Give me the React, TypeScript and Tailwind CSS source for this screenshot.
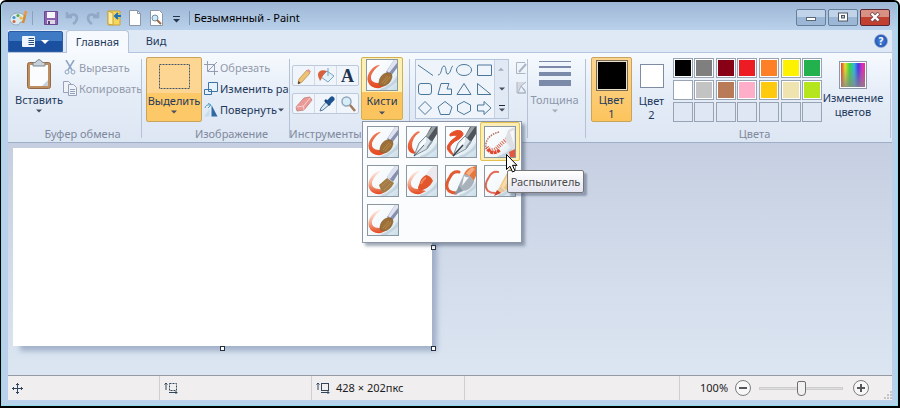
import { useState } from "react";
import type { ReactNode } from "react";

type BrushKind = "brush" | "calligraphy1" | "calligraphy2" | "spray" | "oil" | "crayon" | "marker" | "pencil" | "watercolor";

const brushes: { kind: BrushKind; name: string }[] = [
  { kind: "brush", name: "Кисть" },
  { kind: "calligraphy1", name: "Каллиграфическая кисть 1" },
  { kind: "calligraphy2", name: "Каллиграфическая кисть 2" },
  { kind: "spray", name: "Распылитель" },
  { kind: "oil", name: "Кисть для масла" },
  { kind: "crayon", name: "Пастель" },
  { kind: "marker", name: "Маркер" },
  { kind: "pencil", name: "Карандаш" },
  { kind: "watercolor", name: "Акварель" },
];

const palette = [
  "#000000", "#7f7f7f", "#880015", "#ed1c24", "#ff7f27", "#fff200", "#22b14c",
  "#ffffff", "#c3c3c3", "#b97a57", "#ffaec9", "#ffc90e", "#efe4b0", "#b5e61d",
];

function BrushTip({ kind }: { kind: BrushKind }) {
  switch (kind) {
    case "brush":
    case "watercolor":
      return (
        <>
          <path d="M28 1H31V9L25 17L20 13Z" fill="#8890b0" />
          <path d="M28 1L21 12L23 14L31 4V1Z" fill="#dfe3f1" />
          <path d="M13 23Q14 16 20 14Q26 13 26 18Q24 26 17 27Q12 27 13 23Z" fill="#9c7038" stroke="#7d5728" strokeWidth=".6" />
          <path d="M16 24L22 17M18 25L24 18" stroke="#b98a4c" />
        </>
      );
    case "oil":
      return (
        <>
          <path d="M28 1H31V9L26 17L20 12Z" fill="#8890b0" />
          <path d="M28 1L20 12L23 14L31 4V1Z" fill="#dfe3f1" />
          <path d="M12 20L20 13L27 18Q23 26 15 28Z" fill="#a27b46" />
          <path d="M15 21L22 15M17 25L24 18" stroke="#b58d55" />
        </>
      );
    case "calligraphy1":
    case "calligraphy2":
      return (
        <>
          <path d="M25 1H31V8L26 16L20 10Z" fill="#4f555b" />
          <path d="M26 1L20 10L22 12L30 1Z" fill="#9ba2a8" />
          <path d="M20 10L26 16L21 23L8 30L13 17Z" fill="#d9e2e8" stroke="#6a7a86" strokeWidth=".8" />
          <path d="M20 11L14 18L11 26L20 16Z" fill="#fafdff" />
          <path d="M8 30L18 19" stroke="#333f48" strokeWidth={kind === "calligraphy2" ? 1.4 : 0.8} />
          <path d="M21 22L26 15" stroke="#8a99a5" strokeWidth="1.500" />
        </>
      );
    case "spray":
      return (
        <>
          <path d="M24 4L31 1V26L28 24L21 14Z" fill="#dfe0e3" />
          <path d="M26 6L30 4V18Z" fill="#f8f8f8" />
          <path d="M25 26L31 23V31H26Z" fill="#e4593d" />
        </>
      );
    case "crayon":
      return (
        <>
          <path d="M27 1H31V13L26 17L19 10Z" fill="#ece8ec" />
          <path d="M13 20Q15 12 20 10Q25 11 27 16Q23 24 13 26Q11 23 13 20Z" fill="#e2562b" />
          <path d="M15 19Q17 14 20 13" stroke="#ef835c" strokeWidth="2" fill="none" />
        </>
      );
    case "marker":
      return (
        <>
          <path d="M19 9Q22 2 31 1V11L28 17Z" fill="#e8763f" />
          <path d="M21 8L27 2L30 4L24 11Z" fill="#f5ad82" />
          <path d="M19 9Q27 10 29 17Q25 27 15 26L13 22Z" fill="#a9b1ba" />
          <path d="M19 11Q22 13 24 12L17 21Z" fill="#f6f8fa" />
          <path d="M14 21L18 26L9 30Z" fill="#8b98a6" />
        </>
      );
    case "pencil":
      return (
        <>
          <path d="M27 1L31 4V19L24 26L16 21Z" fill="#edc078" />
          <path d="M27 4L17 21L20 23L30 7Z" fill="#f8dba6" />
          <path d="M16 21L22 26L11 30Z" fill="#e8c79d" />
          <path d="M13 25L17 28L10 31Z" fill="#d0402b" />
        </>
      );
  }
}

function BrushStroke({ kind }: { kind: BrushKind }) {
  const ink = `url(#ink-${kind})`;
  switch (kind) {
    case "calligraphy1":
      return <path d="M14 6Q12 4 8 8Q-1 18 3 25Q5 28 11 28L8 25Q4 20 8 12Q11 8 14 6Z" fill={ink} />;
    case "calligraphy2":
      return <path d="M5 8Q11 3 16 5Q21 8 14 13Q4 18 5 23L9 30Q0 24 3 19Q5 15 11 11Q14 8 5 10Z" fill="#e5502b" stroke="#e5502b" />;
    case "spray":
      return (
        <g fill="none">
          <path d="M15 6Q4 9 2 17Q1 24 5 26" stroke="#b8705e" strokeWidth="1.500" strokeDasharray="1.500 1" />
          <path d="M3 21Q7 27 13 22Q17 18 23 13" stroke="#d9604b" strokeWidth="4" strokeDasharray="1 1.200" />
          <path d="M4 23Q8 30 16 24" stroke="#e1452c" strokeWidth="3" strokeDasharray="3 .6" />
        </g>
      );
    case "marker":
    case "pencil":
      return (
        <path
          d="M14 7Q8 6 5 12Q-1 21 4 26Q7 28 11 28"
          fill="none"
          stroke={kind === "pencil" ? "#df6a55" : "#e25a32"}
          strokeWidth={kind === "pencil" ? 2 : 3}
          strokeLinecap="round"
        />
      );
    default:
      return <path d="M14 6Q9 6 5 11Q0 17 2 23Q5 30 14 29L20 26L12 24Q4 24 5 17Q7 11 14 6Z" fill={ink} />;
  }
}

function BrushIcon({ kind }: { kind: BrushKind }) {
  const pale = kind === "oil" || kind === "watercolor" || kind === "crayon";
  return (
    <svg viewBox="0 0 32 32" className="size-8 shrink-0" aria-hidden="true">
      <defs>
        <linearGradient id={`paper-${kind}`} x1="0" y1="0" x2="1" y2="1">
          <stop offset="0" stopColor="#ffffff" />
          <stop offset=".6" stopColor="#f3f8fb" />
          <stop offset="1" stopColor="#c6dbe7" />
        </linearGradient>
        <linearGradient id={`ink-${kind}`} x1="0" y1="0" x2="0" y2="1">
          <stop offset="0" stopColor={pale ? "#fdeae2" : "#ec7a55"} />
          <stop offset=".5" stopColor={pale ? "#f5b197" : "#ea6a44"} />
          <stop offset="1" stopColor="#e5481f" />
        </linearGradient>
      </defs>
      <rect x=".5" y=".5" width="31" height="31" fill={`url(#paper-${kind})`} stroke="#8b98a2" />
      <path d="M14 30Q25 27 31 17V23L20 31H14Z" fill="#b9ccd8" opacity=".7" />
      <BrushStroke kind={kind} />
      <BrushTip kind={kind} />
    </svg>
  );
}

function Arrow({ muted = false }: { muted?: boolean }) {
  return (
    <svg viewBox="0 0 6 4" className="h-1 w-1.5 shrink-0" aria-hidden="true">
      <path d="M0 .5H6L3 3.5Z" fill={muted ? "#a3abbb" : "#434e61"} />
    </svg>
  );
}

function Group({ label, className, labelClassName = "", children }: { label: string; className: string; labelClassName?: string; children: ReactNode }) {
  return (
    <section className={`flex flex-col ${className}`} aria-label={label || undefined}>
      <div className="flex h-[69px] items-start">{children}</div>
      <div className={`flex h-4 justify-center leading-4 whitespace-nowrap text-[#7e899d] ${labelClassName}`}>{label}</div>
    </section>
  );
}

function Divider() {
  return <div className="mt-0.5 mb-1 w-px shrink-0 bg-[#b5c2d5]" />;
}

function SmallCommand({ icon, label, muted, arrow }: { icon: ReactNode; label: string; muted?: boolean; arrow?: boolean }) {
  return (
    <button className={`flex h-[21px] w-full items-center gap-px whitespace-nowrap ${muted ? "text-[#939bab]" : "text-[#1e395b]"}`}>
      <span className="flex w-4 shrink-0 justify-center">{icon}</span>
      <span>{label}</span>
      {arrow && <Arrow />}
    </button>
  );
}

function QuickIcon({ label, children }: { label: string; children: ReactNode }) {
  return (
    <button aria-label={label} className="flex w-[21px] justify-center">
      <svg viewBox="0 0 16 16" className="size-4" fill="none" aria-hidden="true">{children}</svg>
    </button>
  );
}

function TitleBar() {
  return (
    <header className="flex h-7 shrink-0 items-center pt-1">
      <svg viewBox="0 0 18 16" className="ml-0.5 h-4 w-[18px]" fill="none" aria-hidden="true">
        <path d="M8 3C3 3 0 6 0 9.500S3 15 7 15c3 0 2-3 4-3 3 0 4-2 4-4 0-3-3-5-7-5Z" fill="#dcebf0" stroke="#8fabbb" />
        <circle cx="4" cy="7.500" r="1.600" fill="#4792cb" /><circle cx="8" cy="5.500" r="1.600" fill="#64a948" />
        <circle cx="4" cy="11.500" r="1.500" fill="#da6340" /><circle cx="11" cy="8" r="1.600" fill="#e4b945" />
        <path d="m15 5-2 8" stroke="#d98d32" strokeWidth="2.500" /><path d="m16 1-1 4" stroke="#e59a4c" strokeWidth="3" />
      </svg>
      <span className="ml-1 h-3.5 w-px bg-[#8ba2bd]" />
      <div className="ml-[7px] flex">
        <QuickIcon label="Сохранить">
          <path d="M1.500 1.500h13v13h-13Z" fill="#8a62b0" stroke="#694a92" />
          <path d="M4 2h8v6H4Z" fill="#f4f6fb" /><path d="M4 10h8v4H4Z" fill="#dbd7e5" /><path d="M5 11h2v3H5Z" fill="#594173" />
        </QuickIcon>
        <QuickIcon label="Отменить">
          <path d="M3 2v5h5M3 7c5-4 10-3 10 1 0 3-1 4-4 6" stroke="#93a7c6" strokeWidth="2.500" />
        </QuickIcon>
        <QuickIcon label="Вернуть">
          <path d="M13 2v5H8M13 7C8 3 3 4 3 8c0 3 1 4 4 6" stroke="#93a7c6" strokeWidth="2.500" />
        </QuickIcon>
        <QuickIcon label="Открыть">
          <path d="M2 1h12v14H2Z" fill="#f7d65c" stroke="#c9a23c" /><path d="M2 1l5 2v12l-5-1Z" fill="#ffeea2" stroke="#c9a23c" />
          <path d="M15 6H10M12 3 9 6l3 3" stroke="#1c74b8" strokeWidth="2" />
        </QuickIcon>
        <QuickIcon label="Создать">
          <path d="M2.500 .5h8l3 3v12h-11Z" fill="#fff" stroke="#8c98a8" /><path d="M10.500 .5v3h3" stroke="#8c98a8" />
        </QuickIcon>
        <QuickIcon label="Просмотр">
          <path d="M2.500 .5h9l3 3v12h-12Z" fill="#fff" stroke="#8c98a8" />
          <circle cx="7" cy="8" r="3" fill="#cfe8f5" stroke="#6e8da5" /><path d="m9 10 4 4" stroke="#9b6b47" strokeWidth="2" />
        </QuickIcon>
        <QuickIcon label="Настройка панели">
          <path d="M4 6.500h7" stroke="#24364d" /><path d="M4 9h7l-3.500 3.500Z" fill="#24364d" />
        </QuickIcon>
      </div>
      <span className="mr-1 ml-0.5 h-3.5 w-px bg-[#7a93b2]" />
      <h1 className="text-black">Безымянный - Paint</h1>
      <div className="mr-0.5 mb-0.5 ml-auto flex gap-0.5">
        {["Свернуть", "Развернуть", "Закрыть"].map((name, i) => (
          <button
            key={name}
            aria-label={name}
            className={`flex h-[17px] w-[30px] items-center justify-center rounded-[2px] border bg-linear-to-b from-50% to-50% ${
              i === 2 ? "border-[#5b2735] from-[#d99183] to-[#c1402f]" : "border-[#667f9d] from-[#c1d3e8] to-[#9cb7d6]"
            }`}
          >
            <svg viewBox="0 0 12 10" className="h-2.5 w-3" fill="none" aria-hidden="true">
              {i === 0 && <rect x="1.500" y="5.500" width="9" height="3" fill="#fff" stroke="#5a6777" />}
              {i === 1 && (
                <>
                  <rect x="1.500" y="1" width="9" height="8" fill="#fff" stroke="#4d5866" />
                  <rect x="4.500" y="3.500" width="3" height="2.500" fill="#b3c6dc" stroke="#4d5866" />
                </>
              )}
              {i === 2 && (
                <>
                  <path d="m2 1 8 8M10 1 2 9" stroke="#7c4a50" strokeWidth="4" />
                  <path d="m2.500 1.500 7 7M9.500 1.500l-7 7" stroke="#fff" strokeWidth="2.400" />
                </>
              )}
            </svg>
          </button>
        ))}
      </div>
    </header>
  );
}

function TabRow() {
  return (
    <nav className="flex h-[22px] shrink-0 items-end bg-[#dfe8f5]">
      <button aria-label="Меню Paint" className="flex h-[21px] w-[55px] items-center justify-center gap-1.5 rounded-t-xs border border-[#2a5ca5] bg-linear-to-b from-[#3f7bc4] from-50% to-[#1b4f9f] to-50%">
        <svg viewBox="0 0 13 11" className="h-[11px] w-[13px]" aria-hidden="true">
          <rect width="13" height="11" rx="1" fill="#eef5ff" />
          <path d="M6.500 2.500H12M6.500 4.500H12M6.500 6.500H12M6.500 8.500H12" stroke="#2b4e7c" />
        </svg>
        <svg viewBox="0 0 8 4" className="h-1 w-2" aria-hidden="true"><path d="M0 0h8L4 4Z" fill="#fff" /></svg>
      </button>
      <button className="relative z-20 -mb-px ml-[3px] h-[23px] w-[63px] rounded-t-sm border border-b-0 border-[#b3c4dc] bg-[#f6fafe] text-[#1e395b]">Главная</button>
      <button className="h-[22px] w-[54px] text-[#1e395b]">Вид</button>
      <button aria-label="Справка" className="mr-1 mb-1 ml-auto flex size-3.5 items-center justify-center rounded-full border border-[#8fa6d4] bg-radial from-[#4f8ce6] to-[#123f9b] text-[10px] font-bold text-white">?</button>
    </nav>
  );
}

function ToolCell({ label, children }: { label: string; children: ReactNode }) {
  return (
    <button aria-label={label} className="flex flex-1 items-center justify-center border-r border-[#d0dae8] last:border-r-0">
      <svg viewBox="0 0 18 18" className="size-[18px]" fill="none" aria-hidden="true">{children}</svg>
    </button>
  );
}

function ToolsGroup() {
  const row = "flex h-[21px] rounded-xs border border-[#bccadc] bg-[#f0f5fb]";
  return (
    <Group label="Инструменты" className="w-[71px] shrink-0">
      <div className="flex w-full flex-col gap-[7px] px-0.5 pt-2">
        <div className={row}>
          <ToolCell label="Карандаш">
            <path d="m4 12 8-9 3 3-8 9-4 2Z" fill="#efc374" stroke="#b98d4a" strokeWidth=".8" /><path d="m11.500 3.500 3 3 1.500-2-2.500-2.500Z" fill="#dd9a92" /><path d="m3 17 .5-3 2 2Z" fill="#333" />
          </ToolCell>
          <ToolCell label="Заливка">
            <path d="m10 4 7 5-6 6-7-5Z" fill="#e2f0f8" stroke="#79a3c0" /><path d="M11 1v8" stroke="#79a3c0" />
            <path d="M10 4C5 2 1 4 1 8c0 2 1 3 2 6 2-2 2-6 7-10Z" fill="#d8603c" />
          </ToolCell>
          <button aria-label="Текст" className="flex-1 text-[18px] leading-[19px] font-bold text-[#20334e]">
            <span className="font-['Liberation_Serif',serif]">A</span>
          </button>
        </div>
        <div className={row}>
          <ToolCell label="Ластик">
            <path d="m9 3 6-1 2 3-8 10-7 1-1-4Z" fill="#eb9a98" stroke="#c27b78" strokeWidth=".8" /><path d="m1.500 12 7-1 7-8.500M8.500 11l.5 4" stroke="#f9d2ce" />
          </ToolCell>
          <ToolCell label="Палитра">
            <path d="m10 6 3 3-7 6-3 1 1-3Z" fill="#dcebf5" stroke="#567799" /><path d="m8 5 5 5" stroke="#163f76" strokeWidth="2.500" />
            <path d="m12 7 3-3" stroke="#1d5390" strokeWidth="5" strokeLinecap="round" />
          </ToolCell>
          <ToolCell label="Масштаб">
            <circle cx="7.500" cy="6.500" r="4.500" fill="#d8edf8" stroke="#8fa8bd" strokeWidth="1.500" /><path d="m11 10 5 6" stroke="#a4785a" strokeWidth="2.500" />
          </ToolCell>
        </div>
      </div>
    </Group>
  );
}

const shapes: { name: string; d: string }[] = [
  { name: "Линия", d: "M1 2 16 12.500" },
  { name: "Кривая", d: "M1 12C5 12 4 3 7 3s1 9 4 8 3-8 5-8" },
  { name: "Овал", d: "M8 1.500a7.500 5.500 0 1 0 .01 0Z" },
  { name: "Прямоугольник", d: "M1.500 2h14v10.500h-14Z" },
  { name: "Скругленный прямоугольник", d: "M4 1.500h8q2.500 0 2.500 2.500v6q0 2.500-2.500 2.500H4Q1.500 12.500 1.500 10V4Q1.500 1.500 4 1.500Z" },
  { name: "Многоугольник", d: "M4 1.500h8L10 7h4.500v5.500H1Z" },
  { name: "Треугольник", d: "M8 1.500 15 12.500H1Z" },
  { name: "Прямоугольный треугольник", d: "M1.500 1.500v11H15Z" },
  { name: "Ромб", d: "M8 .5 14.500 7 8 13.500 1.500 7Z" },
  { name: "Пятиугольник", d: "M8 .5 15 6l-2.500 7.500h-9L1 6Z" },
  { name: "Шестиугольник", d: "M8 .5 14.500 4v6L8 13.500 1.500 10V4Z" },
  { name: "Стрелка вправо", d: "M1.500 4H8V.5L15 7 8 13.500V10H1.500Z" },
];

function ShapesGroup() {
  return (
    <Group label="" className="w-[117px] shrink-0">
      <div className="mt-0.5 ml-[5px] flex h-[60px] w-[94px] border border-[#b4c4da] bg-[#eff4fb]">
        <div className="grid flex-1 grid-cols-4 place-items-center">
          {shapes.map((s) => (
            <button key={s.name} aria-label={s.name}>
              <svg viewBox="0 0 17 14" className="h-3.5 w-[17px]" fill="none" stroke="#4a7799" aria-hidden="true"><path d={s.d} /></svg>
            </button>
          ))}
        </div>
        <div className="flex w-3.5 flex-col border-l border-[#c5d2e3] bg-[#e1e9f5]">
          <button aria-label="Вверх" className="flex flex-1 rotate-180 items-center justify-center"><Arrow muted /></button>
          <button aria-label="Вниз" className="flex flex-1 items-center justify-center"><Arrow /></button>
          <button aria-label="Все фигуры" className="flex flex-1 flex-col items-center justify-center gap-0.5">
            <span className="h-px w-1.5 bg-[#1f2b3d]" /><Arrow />
          </button>
        </div>
      </div>
      <div className="flex flex-1 flex-col gap-1.5 overflow-hidden pt-1 pl-1.5">
        <button aria-label="Контур фигуры">
          <svg viewBox="0 0 13 14" className="h-3.5 w-[13px]" fill="none" stroke="#adb5c2" aria-hidden="true">
            <path d="M10 1.500H1.500v11h9" /><path d="m4 11 7-8" strokeWidth="2" />
          </svg>
        </button>
        <button aria-label="Заливка фигуры">
          <svg viewBox="0 0 13 14" className="h-3.5 w-[13px]" fill="#d5dae2" stroke="#adb5c2" aria-hidden="true">
            <path d="M2 1V12H10V9L6 5l5-4M3 12l3-7 5 7Z" />
          </svg>
        </button>
      </div>
    </Group>
  );
}

function BrushesGroup({ selected, onSelect }: { selected: BrushKind; onSelect: (kind: BrushKind) => void }) {
  return (
    <section className="w-12 shrink-0">
      <div className="relative w-[42px]">
        <button className="flex h-[63px] w-[42px] flex-col items-center rounded-xs border border-[#d3b04a] bg-linear-to-b from-[#fdf0b4] from-55% to-[#fbc45e] to-55% pt-px text-[#1e395b]">
          <BrushIcon kind="brush" />
          <span className="mt-0.5 mb-0.5 leading-4">Кисти</span>
          <Arrow />
        </button>
        <div className="absolute top-16 left-px z-20 h-[122px] w-[160px] border border-[#8b95a5] bg-[#fbfcfe] shadow-[3px_3px_3px_rgba(70,85,110,0.5)]">
          <div className="grid w-[156px] grid-cols-4">
            {brushes.map((b) => (
              <div key={b.kind} className="relative">
                <button
                  aria-label={b.name}
                  onClick={() => onSelect(b.kind)}
                  className={`flex h-[39px] w-10 items-center justify-center rounded-xs border ${
                    selected === b.kind ? "border-[#e3c050] bg-[#fdeeb6]" : "border-transparent"
                  }`}
                >
                  <BrushIcon kind={b.kind} />
                </button>
                {b.kind === "spray" && (
                  <>
                    <div role="tooltip" className="absolute top-12 left-[27px] z-10 flex h-[23px] w-[77px] items-center justify-center rounded-xs border border-[#767676] bg-linear-to-b from-white to-[#e5e6f0] text-[#4c4c4c] shadow-[3px_3px_2px_rgba(70,85,110,0.45)]">
                      Распылитель
                    </div>
                    <svg viewBox="0 0 12 19" className="absolute top-8 left-[26px] z-20 h-[19px] w-3" aria-hidden="true">
                      <path d="M.5.5v15l3.500-3.300 2.500 5.800 2.500-1.200-2.500-5.500H11Z" fill="#fff" stroke="#000" />
                    </svg>
                  </>
                )}
              </div>
            ))}
          </div>
        </div>
      </div>
    </section>
  );
}

function Ribbon() {
  const [selected, setSelected] = useState<BrushKind>("spray");
  return (
    <div className="relative z-10 flex h-[91px] shrink-0 border-t border-b border-t-[#b3c4dc] border-b-[#9daec6] bg-linear-to-b from-[#f6fafe] via-[#e4ecf7] to-[#dde6f3] pt-1 pr-px text-[#1e395b]">
      <Group label="Буфер обмена" className="w-[133px] shrink-0 pl-1" labelClassName="pl-3">
        <button className="flex w-[54px] shrink-0 flex-col items-center pt-0.5">
          <svg viewBox="0 0 26 30" className="h-[30px] w-[26px]" fill="none" aria-hidden="true">
            <rect x="1.500" y="3.500" width="23" height="26" rx="2" fill="#bd8f60" stroke="#94694a" />
            <path d="M4 6h18v21H4Z" fill="#fbfcfd" /><path d="M16 27h6v-6Z" fill="#c6d2dd" />
            <path d="M7 7V4l3-1q3-5 6 0l3 1v3Z" fill="#c8d0d8" stroke="#7d8894" />
          </svg>
          <span className="mt-0.5 mb-px leading-[17px]">Вставить</span>
          <Arrow />
        </button>
        <div className="-ml-1 flex flex-1 flex-col">
          <SmallCommand muted label="Вырезать" icon={
            <svg viewBox="0 0 12 15" className="h-[15px] w-3" fill="none" stroke="#8fa3c2" aria-hidden="true">
              <path d="m2 0 6 10M10 0 4 10" strokeWidth="1.500" /><circle cx="3" cy="12" r="2" /><circle cx="9" cy="12" r="2" />
            </svg>
          } />
          <SmallCommand muted label="Копировать" icon={
            <svg viewBox="0 0 16 15" className="h-[15px] w-4" fill="#eff3f8" stroke="#96a2b7" aria-hidden="true">
              <path d="M1.500.5h5l3 3v8h-8Z" /><path d="M6.500 3.500h5l3 3v8h-8ZM8 8.500h5M8 10.500h5M8 12.500h5" />
            </svg>
          } />
        </div>
      </Group>
      <Divider />
      <Group label="Изображение" className="w-[147px] shrink-0 pl-1" labelClassName="pl-7">
        <button className="flex h-[65px] w-[56px] shrink-0 flex-col items-center rounded-xs border border-[#c9a55c] bg-linear-to-b from-[#fcd692] from-55% to-[#fdc867] to-55% pt-1.5">
          <svg viewBox="0 0 31 25" className="h-[25px] w-[31px]" fill="none" aria-hidden="true">
            <rect x=".5" y=".5" width="30" height="24" stroke="#45556a" strokeDasharray="2 1" />
          </svg>
          <span className="mt-[3px] mb-px leading-[17px]">Выделить</span>
          <Arrow />
        </button>
        <div className="flex flex-1 flex-col pl-px">
          <SmallCommand muted label="Обрезать" icon={
            <svg viewBox="0 0 14 14" className="size-3.5" fill="none" stroke="#939daf" aria-hidden="true"><path d="M3.500 0v10.500H14M0 3.500h10.500V14M4 10 13 1" /></svg>
          } />
          <SmallCommand label="Изменить ра" icon={
            <svg viewBox="0 0 14 14" className="size-3.5" fill="#e8f2fa" stroke="#3f73a3" aria-hidden="true"><path d="M4.500.5h9v9h-9ZM.5 7.500h7v5h-7Z" /></svg>
          } />
          <SmallCommand label="Повернуть" arrow icon={
            <svg viewBox="0 0 14 14" className="size-3.5" fill="none" aria-hidden="true">
              <path d="M7.500 2v11.500h6Z" fill="#2f6aa5" /><path d="M5.500 6v7.500H0Z" fill="#c8ddec" /><path d="M1 5q1-4 5-3M4 0l3 2-3 3" stroke="#4d9fc4" />
            </svg>
          } />
        </div>
      </Group>
      <Divider />
      <ToolsGroup />
      <BrushesGroup selected={selected} onSelect={setSelected} />
      <Divider />
      <ShapesGroup />
      <Divider />
      <Group label="" className="w-[57px] shrink-0">
        <button className="flex w-[53px] flex-col items-center pt-1 whitespace-nowrap text-[#8d97aa]">
          <svg viewBox="0 0 32 27" className="h-[27px] w-8" fill="#7b8aa8" aria-hidden="true">
            <path d="M0 0h32v1H0ZM0 5h32v2H0ZM0 11h32v4H0ZM0 19h32v6H0Z" />
          </svg>
          <span className="mt-[3px] mb-px leading-[17px]">Толщина</span>
          <Arrow muted />
        </button>
      </Group>
      <Divider />
      <Group label="Цвета" className="min-w-[304px] flex-1 pl-[5px]" labelClassName="pl-7">
        <button className="flex h-[65px] w-[41px] shrink-0 flex-col items-center rounded-xs border border-[#c9a55c] bg-linear-to-b from-[#fbd590] to-[#fcc45c] pt-0.5 leading-[14px]">
          <span className="mb-0.5 size-8 border border-[#7b6b4f] bg-black outline-1 -outline-offset-2 outline-[#e9e1cf]" />
          <span>Цвет</span><span>1</span>
        </button>
        <button className="flex h-[65px] w-[39px] shrink-0 flex-col items-center pt-[7px] leading-[14px]">
          <span className="mb-1.5 size-6 border border-[#7e8ca3] bg-white" />
          <span>Цвет</span><span>2</span>
        </button>
        <div className="mt-px ml-px grid w-[151px] shrink-0 grid-cols-7 justify-items-center gap-y-0.5">
          {Array.from({ length: 21 }, (_, i) => (
            <button
              key={i}
              aria-label={palette[i] ?? `Пустой цвет ${i - 13}`}
              className={`size-5 border border-[#98a3b4] ${i < 14 ? "bg-white p-px" : "bg-[#e0e7f4]"}`}
            >
              {i < 14 && <span className="block size-full" style={{ backgroundColor: palette[i] }} />}
            </button>
          ))}
        </div>
        <button className="flex w-[60px] shrink-0 flex-col items-center pt-1 leading-[14px]">
          <svg viewBox="0 0 28 28" className="mb-0.5 size-7" aria-hidden="true">
            <defs>
              <linearGradient id="spectrum">
                <stop offset="0" stopColor="#e8372e" /><stop offset=".17" stopColor="#e6df2d" /><stop offset=".36" stopColor="#3cd33d" />
                <stop offset=".55" stopColor="#30b6e2" /><stop offset=".72" stopColor="#4a36df" /><stop offset=".88" stopColor="#d52ec8" /><stop offset="1" stopColor="#e83868" />
              </linearGradient>
              <linearGradient id="fade" x2="0" y2="1"><stop offset=".2" stopColor="#888" stopOpacity="0" /><stop offset="1" stopColor="#888" stopOpacity=".8" /></linearGradient>
            </defs>
            <rect x=".5" y=".5" width="27" height="27" fill="#fff" stroke="#8b98ac" />
            <rect x="2" y="2" width="24" height="24" fill="url(#spectrum)" /><rect x="2" y="2" width="24" height="24" fill="url(#fade)" />
          </svg>
          <span>Изменение</span><span>цветов</span>
        </button>
      </Group>
      <Divider />
    </div>
  );
}

function Handle({ className }: { className: string }) {
  return <span className={`absolute size-[5px] border border-[#26313f] bg-white ${className}`} />;
}

function Workspace() {
  return (
    <main className="min-h-0 flex-1 bg-linear-to-b from-[#c6cfe1] to-[#dce6f2] pt-[5px] pb-7 pl-[5px]">
      <div className="relative h-[198px] w-[419px] bg-white shadow-[6px_6px_5px_-1px_rgba(110,130,165,0.5)]">
        <Handle className="top-[97px] -right-1" />
        <Handle className="-right-1 -bottom-[5px]" />
        <Handle className="-bottom-[5px] left-[207px]" />
      </div>
    </main>
  );
}

function StatusBar() {
  const [zoom, setZoom] = useState(50);
  const cell = "flex items-center border-r border-[#cfcfd3]";
  return (
    <footer className="flex h-[25px] shrink-0 border-t border-[#969ba3] bg-[#f0eeee] text-[#1c1c24]">
      <div className={`${cell} w-[152px] pl-1`}>
        <svg viewBox="0 0 11 11" className="size-[11px]" fill="none" stroke="#31465c" aria-hidden="true">
          <path d="M5.500 0v11M0 5.500h11M4 2l1.500-1.500L7 2M4 9l1.500 1.500L7 9M2 4 .5 5.500 2 7M9 4l1.500 1.500L9 7" />
        </svg>
      </div>
      <div className={`${cell} w-[152px] pl-1`}><SizeIcon dashed /></div>
      <div className={`${cell} w-[153px] gap-1.5 pl-1`}><SizeIcon /><span>428 × 202пкс</span></div>
      <div className={`${cell} flex-1`} />
      <div className="flex w-[212px] items-center pl-5">
        <label htmlFor="zoom" className="w-[35px]">100%</label>
        <button aria-label="Уменьшить" onClick={() => setZoom(Math.max(0, zoom - 10))}><ZoomIcon /></button>
        <input
          id="zoom"
          type="range"
          value={zoom}
          onChange={(e) => setZoom(Number(e.target.value))}
          className="mx-2 h-4 w-[84px] appearance-none bg-transparent [&::-webkit-slider-runnable-track]:h-[3px] [&::-webkit-slider-runnable-track]:border [&::-webkit-slider-runnable-track]:border-[#cdcdcd] [&::-webkit-slider-runnable-track]:bg-[#dedede] [&::-webkit-slider-thumb]:-mt-[7px] [&::-webkit-slider-thumb]:h-[15px] [&::-webkit-slider-thumb]:w-[9px] [&::-webkit-slider-thumb]:appearance-none [&::-webkit-slider-thumb]:rounded-t-xs [&::-webkit-slider-thumb]:rounded-b-sm [&::-webkit-slider-thumb]:border [&::-webkit-slider-thumb]:border-[#6f6f6f] [&::-webkit-slider-thumb]:bg-[#f1f1f1]"
        />
        <button aria-label="Увеличить" className="ml-0.5" onClick={() => setZoom(Math.min(100, zoom + 10))}><ZoomIcon plus /></button>
        <svg viewBox="0 0 8 8" className="mt-auto mb-px ml-auto size-2" fill="#c5c5c8" aria-hidden="true">
          <path d="M6 0h2v2H6ZM3 3h2v2H3ZM6 3h2v2H6ZM0 6h2v2H0ZM3 6h2v2H3ZM6 6h2v2H6Z" />
        </svg>
      </div>
    </footer>
  );
}

function SizeIcon({ dashed = false }: { dashed?: boolean }) {
  return (
    <svg viewBox="0 0 14 13" className="h-[13px] w-3.5" fill="none" stroke="#31465c" aria-hidden="true">
      <path d="M2 8V1M.5 2.500 2 1 3.500 2.500M5 10.500h8M11.500 9l1.500 1.500-1.500 1.500" />
      <rect x="5.500" y="1.500" width="7" height="7" strokeDasharray={dashed ? "2 1" : undefined} />
    </svg>
  );
}

function ZoomIcon({ plus = false }: { plus?: boolean }) {
  return (
    <svg viewBox="0 0 16 16" className="size-4" fill="none" aria-hidden="true">
      <circle cx="8" cy="8" r="7.500" fill="#f7f7f7" stroke="#7d7d80" />
      <path d={plus ? "M4 8h8M8 4v8" : "M4 8h8"} stroke="#55555a" strokeWidth="2" />
    </svg>
  );
}

export default function App() {
  return (
    <div className="min-h-screen bg-white">
      <div className="flex min-h-screen rounded-t-md border-2 border-l-1 border-black bg-[#8fdcea]">
        <div className="mr-px mb-px ml-px flex flex-1 flex-col rounded-t-sm bg-linear-to-b from-[#9db6d5] to-[#b9d1ea] to-[28px] pr-[5px] pb-[5px] pl-1.5 font-['Noto_Sans',sans-serif] text-[11px] leading-4">
          <TitleBar />
          <TabRow />
          <Ribbon />
          <Workspace />
          <StatusBar />
        </div>
      </div>
    </div>
  );
}
